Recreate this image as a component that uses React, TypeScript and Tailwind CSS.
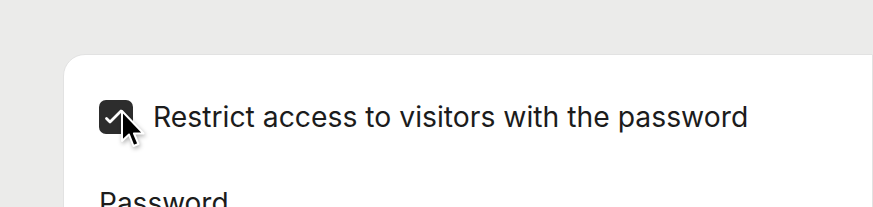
import React from "react";

export default function App() {
  return (
    <div className="w-[873px] h-[207px] overflow-hidden bg-[#ebebea] pt-[54px] pl-[63px]" style={{ fontFamily: "Inter, 'Noto Sans', sans-serif" }}>
      <div className="relative h-[200px] rounded-tl-[22px] bg-white border border-[#e2e2e2] pl-[35px] pt-[45px]">
        <div className="flex items-center gap-[20px]">
          <div className="relative w-[34px] h-[34px] rounded-[7px] bg-[#2d2d2d]">
            <svg className="absolute left-0 top-0" width="34" height="34" viewBox="0 0 34 34" fill="none">
              <path d="M7.5 18.5 L11 22 L22 11" stroke="white" strokeWidth="2.8" strokeLinecap="round" strokeLinejoin="round" />
            </svg>
            <svg className="absolute left-[21px] top-[9px] drop-shadow-[1px_2px_2px_rgba(0,0,0,0.3)]" width="28" height="42" viewBox="0 0 28 42">
              <path d="M2 2 L2 32 L9 25.5 L13.5 37 L18.5 35 L14 24.5 L23.5 24.5 Z" fill="black" stroke="white" strokeWidth="2" strokeLinejoin="round" />
            </svg>
          </div>
          <span className="text-[28.3px] leading-none text-[#1c1c1c]">Restrict access to visitors with the password</span>
        </div>
        <div className="mt-[55px] text-[28px] leading-none text-[#1c1c1c]">Password</div>
      </div>
    </div>
  );
}
